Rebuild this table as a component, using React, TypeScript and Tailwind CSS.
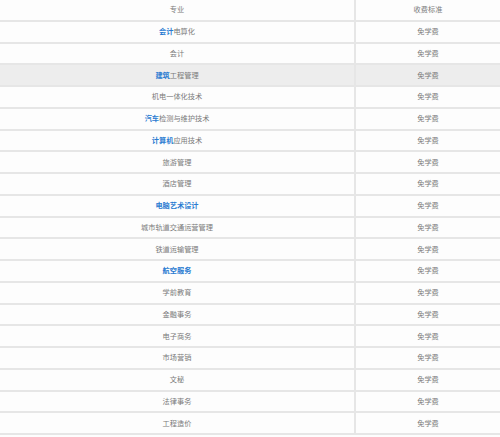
import React from "react";

type Row = { blue?: string; rest?: string; hl?: boolean };

const rows: Row[] = [
  { blue: "会计", rest: "电算化" },
  { rest: "会计" },
  { blue: "建筑", rest: "工程管理", hl: true },
  { rest: "机电一体化技术" },
  { blue: "汽车", rest: "检测与维护技术" },
  { blue: "计算机", rest: "应用技术" },
  { rest: "旅游管理" },
  { rest: "酒店管理" },
  { blue: "电脑艺术设计" },
  { rest: "城市轨道交通运营管理" },
  { rest: "铁道运输管理" },
  { blue: "航空服务" },
  { rest: "学前教育" },
  { rest: "金融事务" },
  { rest: "电子商务" },
  { rest: "市场营销" },
  { rest: "文秘" },
  { rest: "法律事务" },
  { rest: "工程造价" },
];

export default function App() {
  return (
    <div
      className="w-[500px] h-[437px] bg-[#fdfdfd] overflow-hidden text-[7.2px] text-[#7a7a7a]"
      style={{ fontFamily: '"Noto Sans CJK SC", "Noto Sans", sans-serif' }}
    >
      <div className="flex h-[21.75px] border-b-2 border-[#e6e6e6]">
        <div className="w-[354px] flex items-center justify-center">专业</div>
        <div className="w-[2px] bg-[#e6e6e6]" />
        <div className="flex-1 flex items-center justify-center">收费标准</div>
      </div>
      {rows.map((r, i) => (
        <div
          key={i}
          className={`flex h-[21.75px] border-b-2 border-[#e6e6e6] ${r.hl ? "bg-[#ededed]" : ""}`}
        >
          <div className="w-[354px] flex items-center justify-center">
            {r.blue && <span className="text-[#2a7bd1] font-bold">{r.blue}</span>}
            {r.rest && <span>{r.rest}</span>}
          </div>
          <div className="w-[2px] bg-[#e6e6e6]" />
          <div className="flex-1 flex items-center justify-center">免学费</div>
        </div>
      ))}
    </div>
  );
}
